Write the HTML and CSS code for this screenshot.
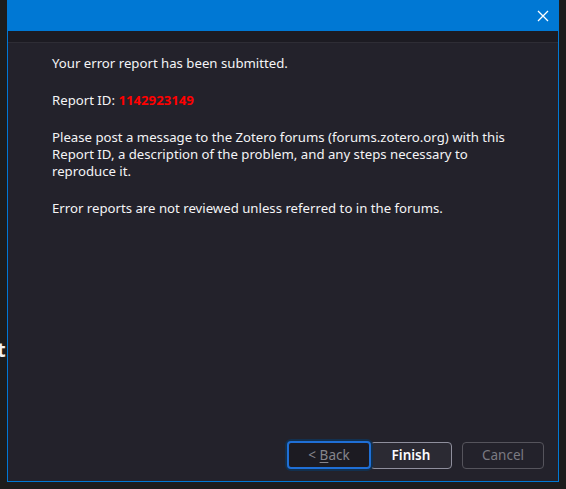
FILE: index.html
```html
<!DOCTYPE html>
<html>
<head>
<meta charset="utf-8">
<link rel="stylesheet" href="styles.css">
</head>
<body>
<span class="bg-glyph">t</span>
<div class="window">
  <div class="titlebar">
    <button class="close" aria-label="Close">
      <svg width="12" height="12" viewBox="0 0 12 12"><path d="M1 1 L11 11 M11 1 L1 11" stroke="#fff" stroke-width="1.3" fill="none"/></svg>
    </button>
  </div>
  <div class="band"></div>
  <div class="content">
    <div class="text">
      <p>Your error report has been submitted.</p>
      <p>Report ID: <span class="rid">1142923149</span></p>
      <p>Please post a message to the Zotero forums (forums.zotero.org) with this Report ID, a description of the problem, and any steps necessary to reproduce it.</p>
      <p>Error reports are not reviewed unless referred to in the forums.</p>
    </div>
    <div class="buttons">
      <div class="pair">
        <button class="btn back">&lt; <u>B</u>ack</button>
        <button class="btn finish">Finish</button>
      </div>
      <button class="btn cancel">Cancel</button>
    </div>
  </div>
</div>
</body>
</html>
```
FILE: styles.css
```css
html, body {
  margin: 0;
  padding: 0;
}
body {
  width: 566px;
  height: 489px;
  overflow: hidden;
  background: #1c1c1c;
  font-family: "Noto Sans", "Open Sans", sans-serif;
  position: relative;
}
.bg-glyph {
  position: absolute;
  left: -3px;
  top: 336px;
  color: #f2f2f2;
  font-family: "Noto Sans", sans-serif;
  font-weight: 700;
  font-size: 20px;
}
.window {
  margin-left: 7px;
  width: 552px;
  height: 482px;
  box-sizing: border-box;
  border: 1px solid #0078d4;
  border-top: none;
  display: flex;
  flex-direction: column;
}
.titlebar {
  height: 31px;
  background: #0078d4;
  display: flex;
  justify-content: flex-end;
  align-items: center;
  padding-right: 8px;
}
.close {
  background: none;
  border: none;
  padding: 0;
  width: 14px;
  height: 14px;
  display: flex;
  align-items: center;
  justify-content: center;
}
.band {
  height: 11px;
  background: #1c1b22;
  border-bottom: 1px solid #2e2d35;
}
.content {
  flex: 1;
  background: #23222b;
  display: flex;
  flex-direction: column;
  justify-content: space-between;
  padding: 12px 14px 12px 44px;
}
.text {
  color: #f4f4f6;
  font-size: 13.2px;
  line-height: 17px;
  width: 460px;
}
.text p {
  margin: 0 0 20px 0;
}
.rid {
  color: #ff0000;
  font-weight: 700;
}
.buttons {
  display: flex;
  justify-content: flex-end;
  align-items: center;
  gap: 10px;
}
.pair {
  display: flex;
  align-items: center;
}
.btn {
  font-family: "Noto Sans", "Open Sans", sans-serif;
  font-size: 13.5px;
  height: 27px;
  width: 82px;
  border-radius: 4px;
  box-sizing: border-box;
  padding: 0;
}
.back {
  width: 84px;
  height: 28px;
  background: #1c1b22;
  color: #86858c;
  border: 2px solid #1f6fd6;
  box-shadow: 0 0 0 2px #12304f;
  margin-right: -1px;
  position: relative;
  z-index: 1;
}
.back u {
  text-decoration-thickness: 1px;
  text-underline-offset: 2px;
}
.finish {
  background: #2b2a33;
  color: #fbfbfe;
  font-weight: 600;
  border: 1px solid #8f8f9d;
}
.cancel {
  background: #23222b;
  color: #7b7a82;
  border: 1px solid #55545c;
}
```
